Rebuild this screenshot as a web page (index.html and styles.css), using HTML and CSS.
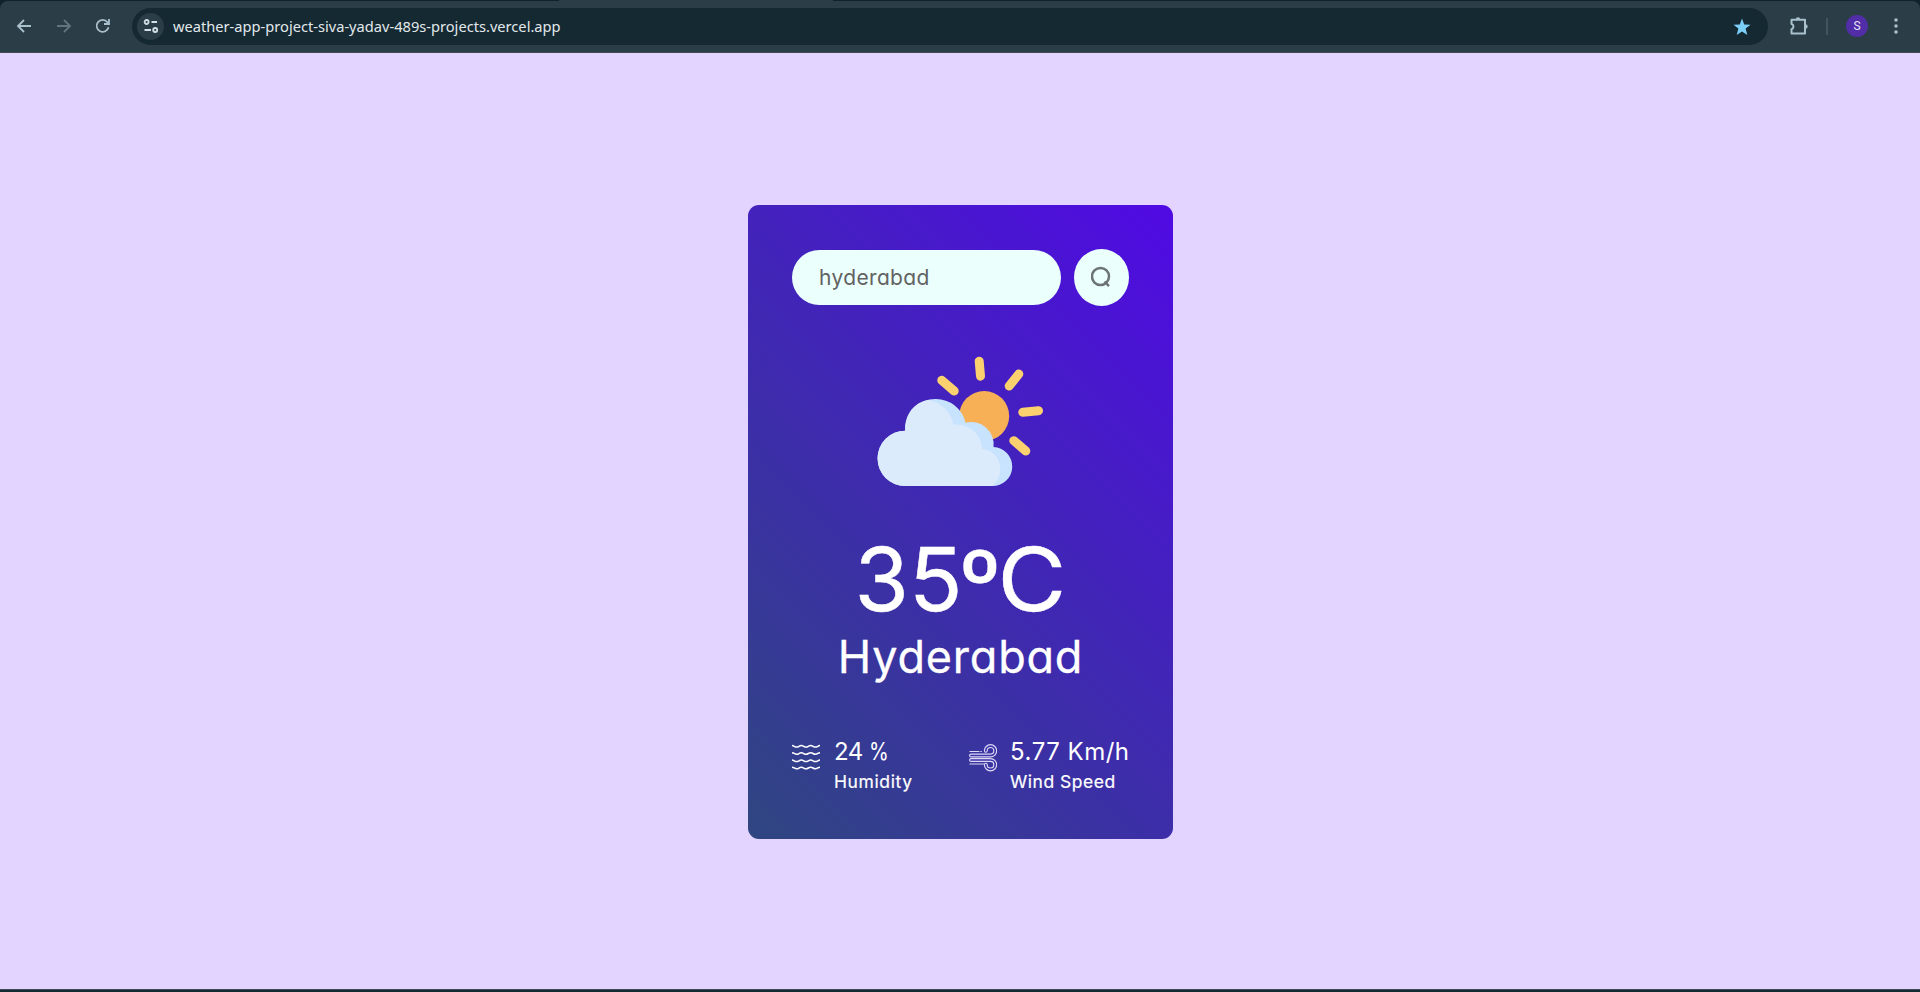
FILE: index.html
```html
<!DOCTYPE html>
<html lang="en">
<head>
<meta charset="utf-8">
<title>Weather App</title>
<link rel="stylesheet" href="styles.css">
</head>
<body>
<div class="browser">
  <div class="tabs"><span class="tab-edge"></span><span class="tab-edge tab-rest"></span></div>
  <header class="toolbar">
    <nav class="nav">
      <svg class="nav-icon" viewBox="0 0 16 16"><path d="M15 8H2M8 2L2 8l6 6"/></svg>
      <svg class="nav-icon off" viewBox="0 0 16 16"><path d="M1 8h13M8 2l6 6-6 6"/></svg>
      <svg class="nav-icon reload" viewBox="0 0 16 16"><path d="M13.5 9.2A6 6 0 1 1 12.4 4.2L14 6M14 1v5H9"/></svg>
    </nav>
    <div class="address">
      <span class="site">
        <svg width="16" height="16" viewBox="0 0 16 16"><circle cx="3.6" cy="4" r="2"/><path d="M8.5 4H14M1.500 12H8"/><circle cx="12.2" cy="12" r="2"/></svg>
      </span>
      <span class="url">weather-app-project-siva-yadav-489s-projects.vercel.app</span>
      <svg class="star" width="18" height="18" viewBox="0 0 18 18"><path d="M9 .5l2.200 5.900 6.300.3-4.900 3.900 1.700 6.400L9 13.400 3.700 17l1.700-6.400L.5 6.700l6.300-.3z"/></svg>
    </div>
    <div class="tools">
      <svg class="puzzle" width="20" height="20" viewBox="0 0 20 20"><path d="M2.500 3.800H16V17.600H2.500V13.200A2.700 2.700 0 0 0 2.500 8z"/><path class="knob" d="M6.800 3.400a2.200 2.200 0 0 1 4.400 0zM16.500 8.300a2.200 2.200 0 0 1 0 4.400z"/></svg>
      <span class="divider"></span>
      <span class="avatar">S</span>
      <svg class="dots" width="4" height="16" viewBox="0 0 4 16"><circle cx="2" cy="2" r="1.800"/><circle cx="2" cy="8" r="1.800"/><circle cx="2" cy="14" r="1.800"/></svg>
    </div>
  </header>
  <main class="page">
    <section class="card">
      <div class="search">
        <div class="field"><span class="query">hyderabad</span></div>
        <button class="go" aria-label="Search"><svg width="20" height="22" viewBox="0 0 20 22"><circle cx="9.500" cy="10.500" r="8.500"/><path d="M13.500 15.500l4.500 4.700"/></svg></button>
      </div>
      <svg class="weather" width="170" height="170" viewBox="0 0 170 170">
        <g class="rays"><path d="M104.200 26.200l1.300 15M143.800 39l-9.600 12M66.800 45.300L79.200 56M147.800 77.300l15.700-1.600M138.800 105.700l12 10.300"/></g>
        <circle class="sun" cx="109.200" cy="81" r="25"/>
        <path class="cloud-shade" d="M30.200 151a27.650 27.650 0 0 1 0-55.300A30.300 30.300 0 0 1 60.500 64 30.300 30.300 0 0 1 90.500 87.700 22.500 22.500 0 0 1 118.500 112a19.500 19.500 0 0 1-1.500 39z"/>
        <path class="cloud" d="M30.200 151a27.650 27.650 0 0 1 0-55.300C29.300 79 40 67 52.800 65A31 31 0 0 1 78.500 89.700C95 88.500 106.500 100 107.200 114c19 1.500 24.500 26 9.800 37z"/>
      </svg>
      <h1 class="temp">35<span class="degree">º</span><span class="unit">C</span></h1>
      <h2 class="city">Hyderabad</h2>
      <div class="details">
        <div class="detail">
          <svg class="humidity" width="28" height="28" viewBox="0 0 28 28"><path id="w" d="M0 2.500c2 0 2.500 1.600 4.700 1.600S7 2.500 9.300 2.500s2.500 1.600 4.700 1.600 2.500-1.600 4.700-1.600 2.500 1.600 4.700 1.600S26 2.500 28 2.500"/><use href="#w" y="7.200"/><use href="#w" y="14.500"/><use href="#w" y="21.700"/></svg>
          <div><p class="value v-hum">24 <span class="percent">%</span></p><p class="label l-hum">Humidity</p></div>
        </div>
        <div class="detail">
          <svg class="wind" width="28" height="28" viewBox="0 0 28 28">
            <path class="tube" d="M2 11.500H21.500a4.700 4.700 0 1 0-4.700-4.700M2 16H21.500a4.700 4.700 0 1 1-4.700 4.700"/>
            <path class="core" d="M2 11.500H21.500a4.700 4.700 0 1 0-4.700-4.700M2 16H21.500a4.700 4.700 0 1 1-4.700 4.700"/>
            <path class="gust" d="M1 7.500h9M11.800 7.500h.6M1 20h13.500"/>
          </svg>
          <div><p class="value v-wind">5.77 Km/h</p><p class="label l-wind">Wind Speed</p></div>
        </div>
      </div>
    </section>
  </main>
  <footer class="edge"></footer>
</div>
</body>
</html>
```
FILE: styles.css
```css
* { box-sizing: border-box; margin: 0; padding: 0; }
body { background: #10222b; }
svg { display: block; flex: none; fill: none; }
.browser { width: 1920px; height: 992px; display: flex; flex-direction: column; overflow: hidden; }
.tabs { height: 1px; flex: none; display: flex; justify-content: space-between; background: #2b3e47; }
.tab-edge { width: 559px; background: #10222b; }
.tab-rest { width: 1087px; }
.toolbar { height: 52px; flex: none; display: flex; align-items: center; padding: 0 22px 1px 16px; background: #2b3e47; border-bottom: 1px solid #414a52; border-radius: 8px 8px 0 0; }
.nav { display: flex; gap: 24px; width: 116px; }
.nav-icon { width: 16px; height: 16px; stroke: #a9c0cd; stroke-width: 1.8; }
.nav-icon.off { stroke: #63747d; }
.nav-icon.reload { margin-left: -1px; }
.address { width: 1636px; height: 37px; border-radius: 19px; background: #152932; display: flex; align-items: center; padding: 0 17px 0 5px; }
.site { width: 27px; height: 27px; border-radius: 50%; background: #2b3e47; display: flex; align-items: center; justify-content: center; }
.site svg { stroke: #d3e0e7; stroke-width: 1.8; }
.url { flex: 1; margin-left: 9px; padding-bottom: 1px; font: 14.65px/20px "Noto Sans", sans-serif; color: #e1e8eb; white-space: nowrap; }
.star { margin-top: 1px; }
.star path { fill: #7ccff7; }
.tools { flex: 1; display: flex; align-items: center; padding-left: 21px; }
.puzzle { stroke: #a9c0cd; stroke-width: 2; stroke-linejoin: round; }
.puzzle .knob { fill: #a9c0cd; stroke: none; }
.divider { width: 2px; height: 17px; margin-left: 17px; background: #42545e; }
.avatar { width: 22px; height: 22px; margin: 0 26px 0 18px; border-radius: 50%; background: #512da8; color: #e8e2f5; font: 12px/22px Roboto, sans-serif; text-align: center; }
.dots { fill: #a9c0cd; }
.page { flex: 1; background: #e3d4ff; display: flex; justify-content: center; padding-top: 152px; align-items: flex-start; }
.card { width: 425px; height: 634px; margin-left: 1px; border-radius: 11px; padding: 44px; background: linear-gradient(45deg, #2f4680, #500ae4); color: #fff; font-family: Inter, sans-serif; font-feature-settings: "cv11" 1; display: flex; flex-direction: column; align-items: center; }
.search { width: 337px; height: 57px; flex: none; display: flex; align-items: center; justify-content: space-between; }
.field { width: 269px; height: 55px; border-radius: 28px; background: #ebfffc; padding: 0 0 0 27px; }
.query { font-size: 21px; line-height: 55px; color: #626262; letter-spacing: .35px; }
.go { width: 55px; height: 57px; border: 0; border-radius: 50%; background: #ebfffc; display: flex; align-items: center; justify-content: center; padding: 0 2px 2px 0; }
.go svg { stroke: #6b7473; stroke-width: 2.5; }
.weather { width: 170px; height: 170px; margin: 29px 1px 0 0; }
.rays { stroke: #fbd06f; stroke-width: 9; stroke-linecap: round; }
.sun { fill: #f7b056; }
.cloud-shade { fill: #c7e3fd; }
.cloud { fill: #dcebfc; }
.temp { font-size: 88px; font-weight: 400; line-height: 100px; height: 100px; margin-top: 24px; white-space: nowrap; -webkit-text-stroke: .5px #fff; }
.degree, .unit { display: inline-block; }
.degree { transform: translate(-2px, 2px) scaleX(1.08); }
.unit { transform: scaleX(1.07); transform-origin: right; }
.city { font-size: 45px; font-weight: 400; line-height: 60px; margin-top: -2px; letter-spacing: .8px; white-space: nowrap; -webkit-text-stroke: .3px #fff; }
.details { width: 337px; margin-top: 48px; display: flex; justify-content: space-between; }
.detail { display: flex; gap: 13px; white-space: nowrap; }
.humidity { margin-top: 8px; stroke: #fff; stroke-width: 1.5; }
.wind { margin-top: 9px; stroke-linecap: round; }
.tube { stroke: #dcd9f5; stroke-width: 4; }
.core { stroke: #3b31a8; stroke-width: 1.7; }
.gust { stroke: #dcd9f5; stroke-width: 1.2; }
.value { font-size: 24px; line-height: 34px; }
.v-hum { letter-spacing: -.6px; padding-left: 1px; }
.percent { display: inline-block; transform: scaleX(.84); transform-origin: left; }
.v-wind { letter-spacing: .5px; margin-right: -.5px; }
.label { font-size: 17.5px; line-height: 26px; -webkit-text-stroke: .2px #fff; }
.l-hum { letter-spacing: .6px; padding-left: 1px; }
.l-wind { letter-spacing: .5px; }
.edge { height: 3px; flex: none; background: #142a33; border-top: 1px solid #414a52; }
```
